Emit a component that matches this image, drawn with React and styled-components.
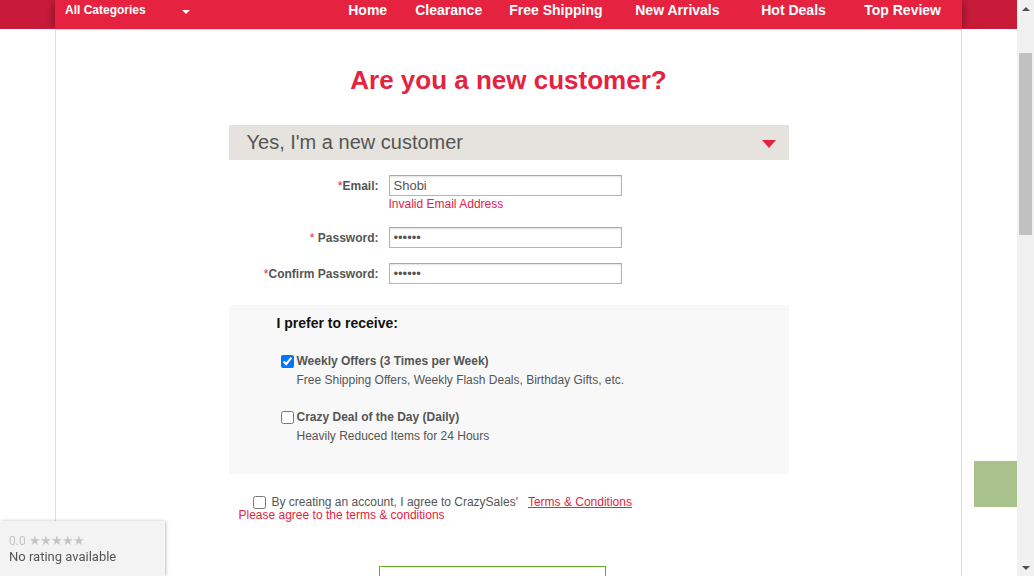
import React from 'react';
import styled, { createGlobalStyle } from 'styled-components';

const GlobalStyle = createGlobalStyle`
  html, body {
    margin: 0;
    padding: 0;
    height: 100%;
    overflow: hidden;
    background: #ffffff;
  }
  body {
    font-family: "Liberation Sans", Arial, sans-serif;
  }
  * {
    box-sizing: border-box;
  }
`;

const Page = styled.div`
  width: 1017px;
  height: 576px;
  overflow: hidden;
`;

const Header = styled.header`
  height: 29px;
  background: #c81b3a;
  display: flex;
  justify-content: center;
  overflow: hidden;
`;

const NavBar = styled.nav`
  width: 907px;
  background: #e5223f;
  display: flex;
  align-items: flex-start;
  padding: 2px 21px 0 10px;
  box-shadow: -5px 0 6px -2px rgba(0, 0, 0, 0.25), 5px 0 6px -2px rgba(0, 0, 0, 0.25);
`;

const Categories = styled.div`
  display: flex;
  align-items: center;
  color: #fff;
  font-size: 12px;
  font-weight: bold;
  line-height: 15px;
  padding-top: 1px;
`;

const Caret = styled.span`
  width: 0;
  height: 0;
  margin: 2px 0 0 36px;
  border-left: 4px solid transparent;
  border-right: 4px solid transparent;
  border-top: 4px solid #fff;
`;

const NavLinks = styled.div`
  margin-left: auto;
  display: flex;
`;

const NavLink = styled.a`
  width: ${(p) => (p.$w ? `${p.$w}px` : 'auto')};
  color: #fff;
  font-size: 14px;
  font-weight: bold;
  line-height: 16px;
  text-decoration: none;
  white-space: nowrap;
`;

const Main = styled.main`
  width: 907px;
  height: 547px;
  margin: 0 auto;
  border: 1px solid #ddd;
  border-bottom: none;
  display: flex;
  flex-direction: column;
  align-items: center;
  overflow: hidden;
`;

const Title = styled.h1`
  margin: 35px 0 0;
  color: #e5223f;
  font-size: 26px;
  line-height: 30px;
  font-weight: bold;
`;

const FormWrap = styled.div`
  width: 560px;
  margin-top: 30px;
  display: flex;
  flex-direction: column;
`;

const Accordion = styled.div`
  height: 35px;
  background: #e6e3de;
  display: flex;
  align-items: center;
  justify-content: space-between;
  padding: 0 13px 0 18px;
  color: #555;
  font-size: 20px;
`;

const RedArrow = styled.span`
  width: 0;
  height: 0;
  margin-top: 3px;
  border-left: 7px solid transparent;
  border-right: 7px solid transparent;
  border-top: 8px solid #e5223f;
`;

const FieldRow = styled.div`
  display: grid;
  grid-template-columns: 150px 233px;
  column-gap: 10px;
  align-items: center;
  margin-top: ${(p) => p.$mt}px;
`;

const Label = styled.label`
  text-align: right;
  color: #555;
  font-size: 12px;
  font-weight: bold;
`;

const Star = styled.span`
  color: #e5223f;
  font-weight: normal;
`;

const Input = styled.input`
  height: 21px;
  width: 233px;
  border: 1px solid #b4b4b4;
  border-top-color: #a8a8a8;
  box-shadow: inset 0 1px 2px rgba(0, 0, 0, 0.12);
  padding: 0 4px;
  font-family: "Liberation Sans", Arial, sans-serif;
  font-size: 13px;
  color: #555;
  outline: none;
`;

const ErrorText = styled.div`
  grid-column: 2;
  color: #e5223f;
  font-size: 12px;
  line-height: 14px;
  margin-top: ${(p) => (p.$mt !== undefined ? p.$mt : 1)}px;
  padding-left: ${(p) => p.$pl || 0}px;
`;

const Panel = styled.div`
  margin-top: 21px;
  height: 169px;
  background: #f8f8f8;
  padding: 10px 0 0 48px;
`;

const PanelTitle = styled.div`
  font-size: 14px;
  line-height: 16px;
  font-weight: bold;
  color: #111;
`;

const Option = styled.div`
  margin: ${(p) => p.$mt}px 0 0 4px;
`;

const OptionHead = styled.label`
  display: flex;
  align-items: center;
  gap: 3px;
  font-size: 12px;
  line-height: 16px;
  font-weight: bold;
  color: #555;
`;

const Check = styled.input`
  margin: 0;
  width: 13px;
  height: 13px;
`;

const OptionSub = styled.div`
  padding-left: 16px;
  margin-top: 2px;
  font-size: 12px;
  line-height: 18px;
  color: #555;
`;

const TermsRow = styled.div`
  margin-top: 20px;
  padding-left: 24px;
  display: flex;
  align-items: center;
  height: 16px;
  font-size: 12px;
  color: #555;
`;

const TermsText = styled.span`
  margin-left: 6px;
`;

const TermsLink = styled.a`
  margin-left: 10px;
  color: #e5223f;
  text-decoration: underline;
`;

const SubmitBox = styled.div`
  margin: 44px 0 0 150px;
  width: 227px;
  height: 44px;
  border: 1px solid #6ab023;
`;

const RatingBadge = styled.div`
  position: fixed;
  left: 0;
  bottom: 0;
  width: 165px;
  height: 55px;
  background: #f3f3f3;
  box-shadow: 1px 0 3px rgba(0, 0, 0, 0.25);
  padding: 13px 9px 0;
  font-family: Roboto, "Liberation Sans", sans-serif;
`;

const Score = styled.div`
  color: #c4c4c4;
  font-size: 12px;
  line-height: 14px;
`;

const Stars = styled.span`
  font-size: 13px;
  letter-spacing: -1px;
`;

const RatingText = styled.div`
  margin-top: 1px;
  color: #555;
  font-size: 13px;
  line-height: 16px;
`;

const GreenTab = styled.div`
  position: fixed;
  right: 17px;
  top: 461px;
  width: 43px;
  height: 46px;
  background: #a9c18b;
`;

const Scrollbar = styled.div`
  position: fixed;
  right: 0;
  top: 0;
  width: 17px;
  height: 576px;
  background: #f1f1f1;
  display: flex;
  flex-direction: column;
  align-items: center;
`;

const ScrollArrow = styled.span`
  width: 0;
  height: 0;
  margin: ${(p) => (p.$down ? 'auto 0 6px' : '7px 0 0')};
  border-left: 4px solid transparent;
  border-right: 4px solid transparent;
  ${(p) => (p.$down ? 'border-top: 4px solid #505050;' : 'border-bottom: 4px solid #505050;')}
`;

const Thumb = styled.div`
  position: absolute;
  top: 53px;
  left: 2px;
  width: 13px;
  height: 182px;
  background: #c1c1c1;
`;

const navItems = [
  { label: 'Home', w: 67 },
  { label: 'Clearance', w: 94 },
  { label: 'Free Shipping', w: 126 },
  { label: 'New Arrivals', w: 126 },
  { label: 'Hot Deals', w: 103 },
  { label: 'Top Review' },
];

export default function App() {
  return (
    <>
      <GlobalStyle />
      <Page>
        <Header>
          <NavBar>
            <Categories>
              All Categories
              <Caret />
            </Categories>
            <NavLinks>
              {navItems.map((item) => (
                <NavLink key={item.label} $w={item.w}>
                  {item.label}
                </NavLink>
              ))}
            </NavLinks>
          </NavBar>
        </Header>
        <Main>
          <Title>Are you a new customer?</Title>
          <FormWrap>
            <Accordion>
              <span>Yes, I'm a new customer</span>
              <RedArrow />
            </Accordion>

            <FieldRow $mt={15}>
              <Label>
                <Star>*</Star>Email:
              </Label>
              <Input type="text" defaultValue="Shobi" readOnly />
              <ErrorText>Invalid Email Address</ErrorText>
            </FieldRow>
            <FieldRow $mt={16}>
              <Label>
                <Star>*</Star> Password:
              </Label>
              <Input type="password" defaultValue="123456" readOnly />
            </FieldRow>
            <FieldRow $mt={15}>
              <Label>
                <Star>*</Star>Confirm Password:
              </Label>
              <Input type="password" defaultValue="123456" readOnly />
            </FieldRow>

            <Panel>
              <PanelTitle>I prefer to receive:</PanelTitle>
              <Option $mt={22}>
                <OptionHead>
                  <Check type="checkbox" defaultChecked />
                  Weekly Offers (3 Times per Week)
                </OptionHead>
                <OptionSub>Free Shipping Offers, Weekly Flash Deals, Birthday Gifts, etc.</OptionSub>
              </Option>
              <Option $mt={20}>
                <OptionHead>
                  <Check type="checkbox" />
                  Crazy Deal of the Day (Daily)
                </OptionHead>
                <OptionSub>Heavily Reduced Items for 24 Hours</OptionSub>
              </Option>
            </Panel>

            <TermsRow>
              <Check type="checkbox" />
              <TermsText>By creating an account, I agree to CrazySales'</TermsText>
              <TermsLink>Terms &amp; Conditions</TermsLink>
            </TermsRow>
            <ErrorText $pl={10} $mt={-2}>
              Please agree to the terms &amp; conditions
            </ErrorText>

            <SubmitBox />
          </FormWrap>
        </Main>
      </Page>

      <RatingBadge>
        <Score>
          0.0 <Stars>★★★★★</Stars>
        </Score>
        <RatingText>No rating available</RatingText>
      </RatingBadge>
      <GreenTab />
      <Scrollbar>
        <ScrollArrow />
        <Thumb />
        <ScrollArrow $down />
      </Scrollbar>
    </>
  );
}
